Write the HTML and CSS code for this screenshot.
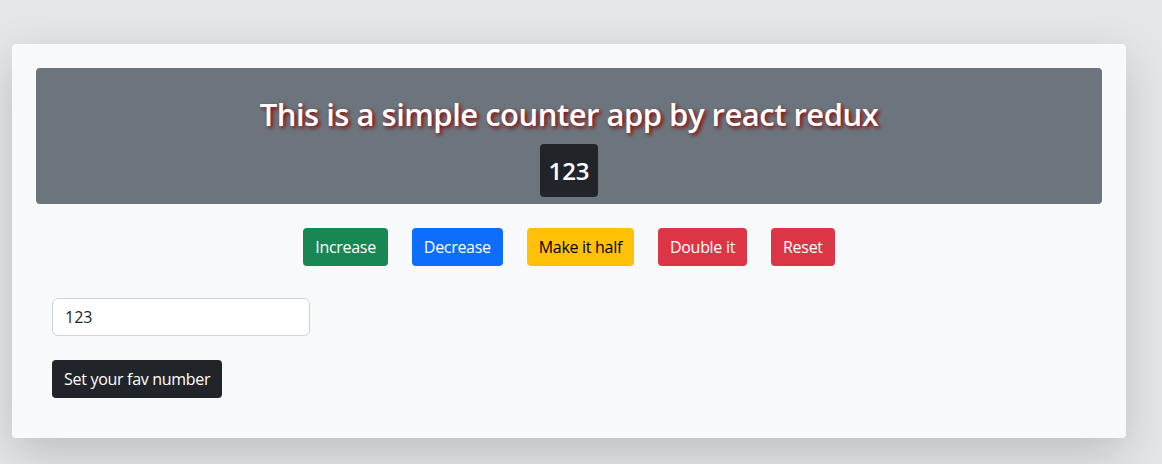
FILE: index.html
```html
<!DOCTYPE html>
<html lang="en">
<head>
<meta charset="utf-8">
<title>Counter App</title>
<link rel="stylesheet" href="styles.css">
</head>
<body>
  <div class="card">
    <div class="hero">
      <h2 class="hero-title">This is a simple counter app by react redux</h2>
      <span class="count-badge">123</span>
    </div>
    <div class="actions">
      <button class="btn btn-success">Increase</button>
      <button class="btn btn-primary">Decrease</button>
      <button class="btn btn-warning">Make it half</button>
      <button class="btn btn-danger">Double it</button>
      <button class="btn btn-danger">Reset</button>
    </div>
    <div class="fav-form">
      <input class="fav-input" type="text" value="123">
      <button class="btn btn-dark">Set your fav number</button>
    </div>
  </div>
</body>
</html>
```

FILE: styles.css
```css
* { box-sizing: border-box; }

html, body {
  margin: 0;
  padding: 0;
}

body {
  background: #e5e6e8;
  font-family: "Open Sans", "Noto Sans", sans-serif;
  color: #212529;
  padding: 44px 36px 26px 12px;
}

.card {
  background: #f8f9fa;
  border-radius: 4px;
  padding: 24px 24px 40px;
  box-shadow: 0 16px 48px rgba(0, 0, 0, 0.175);
}

.hero {
  background: #6c757d;
  border-radius: 4px;
  height: 136px;
  padding-top: 27px;
  display: flex;
  flex-direction: column;
  align-items: center;
}

.hero-title {
  margin: 0 0 11px;
  font-size: 31px;
  font-weight: 600;
  line-height: 38px;
  letter-spacing: -0.5px;
  color: #fff;
  text-shadow: 2px 2px 4px #8b0000;
}

.count-badge {
  display: inline-block;
  background: #212529;
  color: #fff;
  font-size: 24px;
  font-weight: 600;
  line-height: 37px;
  padding: 8px 8px;
  border-radius: 4px;
}

.actions {
  display: flex;
  justify-content: center;
  gap: 24px;
  margin-top: 24px;
}

.btn {
  font-family: inherit;
  font-size: 16px;
  line-height: 24px;
  letter-spacing: -0.3px;
  padding: 7px 12px;
  border: 0;
  border-radius: 4px;
  color: #fff;
  cursor: pointer;
}

.btn-success { background: #198754; }
.btn-primary { background: #0d6efd; }
.btn-warning { background: #ffc107; color: #000; }
.btn-danger { background: #dc3545; }
.btn-dark { background: #212529; }

.fav-form {
  display: flex;
  flex-direction: column;
  align-items: flex-start;
  gap: 24px;
  margin-top: 32px;
  padding: 0 16px;
}

.fav-input {
  width: 258px;
  height: 38px;
  padding: 6px 12px;
  font-family: inherit;
  font-size: 16px;
  color: #212529;
  background: #fff;
  border: 1px solid #ced4da;
  border-radius: 6px;
}
```
